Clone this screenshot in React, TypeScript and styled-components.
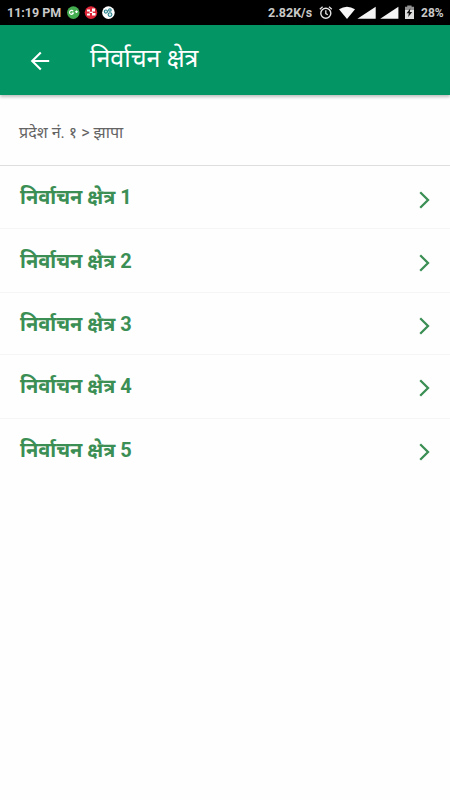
import React from "react";
import styled, { createGlobalStyle } from "styled-components";

const GlobalStyle = createGlobalStyle`
  * { box-sizing: border-box; }
  body { margin: 0; background: #fefefe; font-family: Roboto, "Noto Sans", "Noto Sans Devanagari", sans-serif; }
`;

const Screen = styled.div`
  width: 450px;
  height: 800px;
  overflow: hidden;
  background: #fefefe;
`;

const StatusBar = styled.div`
  height: 25px;
  padding: 0 7px 0 7px;
  display: flex;
  align-items: center;
  justify-content: space-between;
  background: #000;
  color: #c9c9c9;
  font-size: 12.5px;
  font-weight: 700;
  white-space: nowrap;
`;

const StatusGroup = styled.div`
  display: flex;
  align-items: center;
  svg { display: block; flex: none; }
`;

const Clock = styled.span`
  width: 60px;
`;

const Speed = styled.span`
  width: 51px;
`;

const Battery = styled.span`
  width: 22px;
  font-size: 12px;
`;

const Spacer = styled.span`
  width: 6px;
`;

const AppBar = styled.header`
  position: relative;
  height: 70px;
  padding-left: 28px;
  display: flex;
  align-items: center;
  background: #039564;
  color: #fff;
  box-shadow: 0 2px 3px rgba(0, 0, 0, 0.25);
`;

const BackButton = styled.button`
  width: 24px;
  height: 24px;
  margin: 2px 38px 0 0;
  padding: 0;
  border: 0;
  background: none;
  color: inherit;
  svg { display: block; }
`;

const Title = styled.h1`
  margin: 0 0 3px;
  font-size: 25px;
  line-height: 34px;
  font-weight: 400;
`;

const Breadcrumb = styled.nav`
  height: 71px;
  padding: 3px 0 0 19px;
  display: flex;
  align-items: center;
  border-bottom: 1px solid #dedede;
  color: #646464;
  font-size: 16.1px;
`;

const List = styled.ul`
  margin: 0;
  padding: 0;
  list-style: none;
`;

const Row = styled.li<{ $height: number; $bottom?: number }>`
  height: ${(p) => p.$height}px;
  padding: 0 19px ${(p) => p.$bottom ?? 0}px 20px;
  display: flex;
  align-items: center;
  justify-content: space-between;
  border-bottom: 1px solid #f5f5f5;
  color: #3b8f54;
  &:last-child { border-bottom: 0; }
  svg { display: block; margin-top: 5px; }
`;

const RowLabel = styled.span`
  font-size: 20px;
  line-height: 28px;
  font-weight: 700;
`;

const districts = [
  { number: 1, height: 63 },
  { number: 2, height: 64 },
  { number: 3, height: 62 },
  { number: 4, height: 64, bottom: 2 },
  { number: 5, height: 61 },
];

const AppBadges = () => (
  <svg width="50" height="14" viewBox="0 0 50 14">
    <circle cx="6.3" cy="6.6" r="6.3" fill="#43ad50" />
    <path d="M6.2 5.3A2 2 0 1 0 6.4 7.1H4.7M8 5.8h3M9.5 4.5v2.6" fill="none" stroke="#fff" strokeWidth="1.1" />
    <circle cx="24" cy="6.6" r="6.3" fill="#df2638" />
    <path d="M20 3.6h3v2h-3zM25 2.6h3v3h-3zM20 7.6h3v2h-3zM25 7.1h3.5v2.5H25zM22.5 5.8h3.2V7h-3.2z" fill="#fff" />
    <circle cx="41.4" cy="6.6" r="6.3" fill="#fff" />
    <g fill="#d9eff0" stroke="#287f8b" strokeWidth="1.1">
      <circle cx="38.9" cy="5.6" r="1.6" />
      <circle cx="42.9" cy="4" r="1.3" />
      <circle cx="43" cy="8.6" r="1.9" />
    </g>
  </svg>
);

const AlarmIcon = () => (
  <svg width="14" height="14" viewBox="0 0 14 14" fill="none" stroke="#e4e4e4" strokeWidth="1.4">
    <circle cx="6.8" cy="7.3" r="5" />
    <path d="M6.8 4.3v3.3l2 1.2M.8 3.2l2.8-2.4M12.8 3.2L10 .8" strokeWidth="1.3" />
  </svg>
);

const SignalIcons = () => (
  <svg width="76" height="16" viewBox="0 0 76 16">
    <path d="M0 4.3Q8 -0.8 16 4.3L8 14z" fill="#f7f7f7" />
    <path d="M36.7 1.8v12H18.4zM59.4 1.8v12H41.2z" fill="#f4f4f4" />
    <path d="M66 1.8h2.2V.5h4.4v1.3H75V5h-9z" fill="#929292" />
    <path d="M66 5h9v9h-9z" fill="#dedede" />
    <path d="M71.4 3.3L67.6 8.2h2.2l-.6 3.9 4-5.2h-2.4z" fill="#111" />
  </svg>
);

const BackIcon = () => (
  <svg width="24" height="24" viewBox="0 0 24 24" fill="none" stroke="currentColor" strokeWidth="2.1">
    <path d="M21.2 12H4.2M12.8 3.5L4.2 12l8.6 8.5" />
  </svg>
);

const ChevronIcon = () => (
  <svg width="13" height="18" viewBox="0 0 13 18" fill="none" stroke="currentColor" strokeWidth="2.3">
    <path d="M2.2 1.2L10 9l-7.8 7.8" />
  </svg>
);

export default function App() {
  return (
    <Screen>
      <GlobalStyle />
      <StatusBar>
        <StatusGroup>
          <Clock>11:19 PM</Clock>
          <AppBadges />
        </StatusGroup>
        <StatusGroup>
          <Speed>2.82K/s</Speed>
          <AlarmIcon />
          <Spacer />
          <SignalIcons />
          <Spacer />
          <Battery>28%</Battery>
        </StatusGroup>
      </StatusBar>
      <AppBar>
        <BackButton aria-label="Back"><BackIcon /></BackButton>
        <Title>निर्वाचन क्षेत्र</Title>
      </AppBar>
      <Breadcrumb>प्रदेश नं. १ &gt; झापा</Breadcrumb>
      <List>
        {districts.map(({ number, height, bottom }) => (
          <Row key={number} $height={height} $bottom={bottom}>
            <RowLabel>निर्वाचन क्षेत्र {number}</RowLabel>
            <ChevronIcon />
          </Row>
        ))}
      </List>
    </Screen>
  );
}
